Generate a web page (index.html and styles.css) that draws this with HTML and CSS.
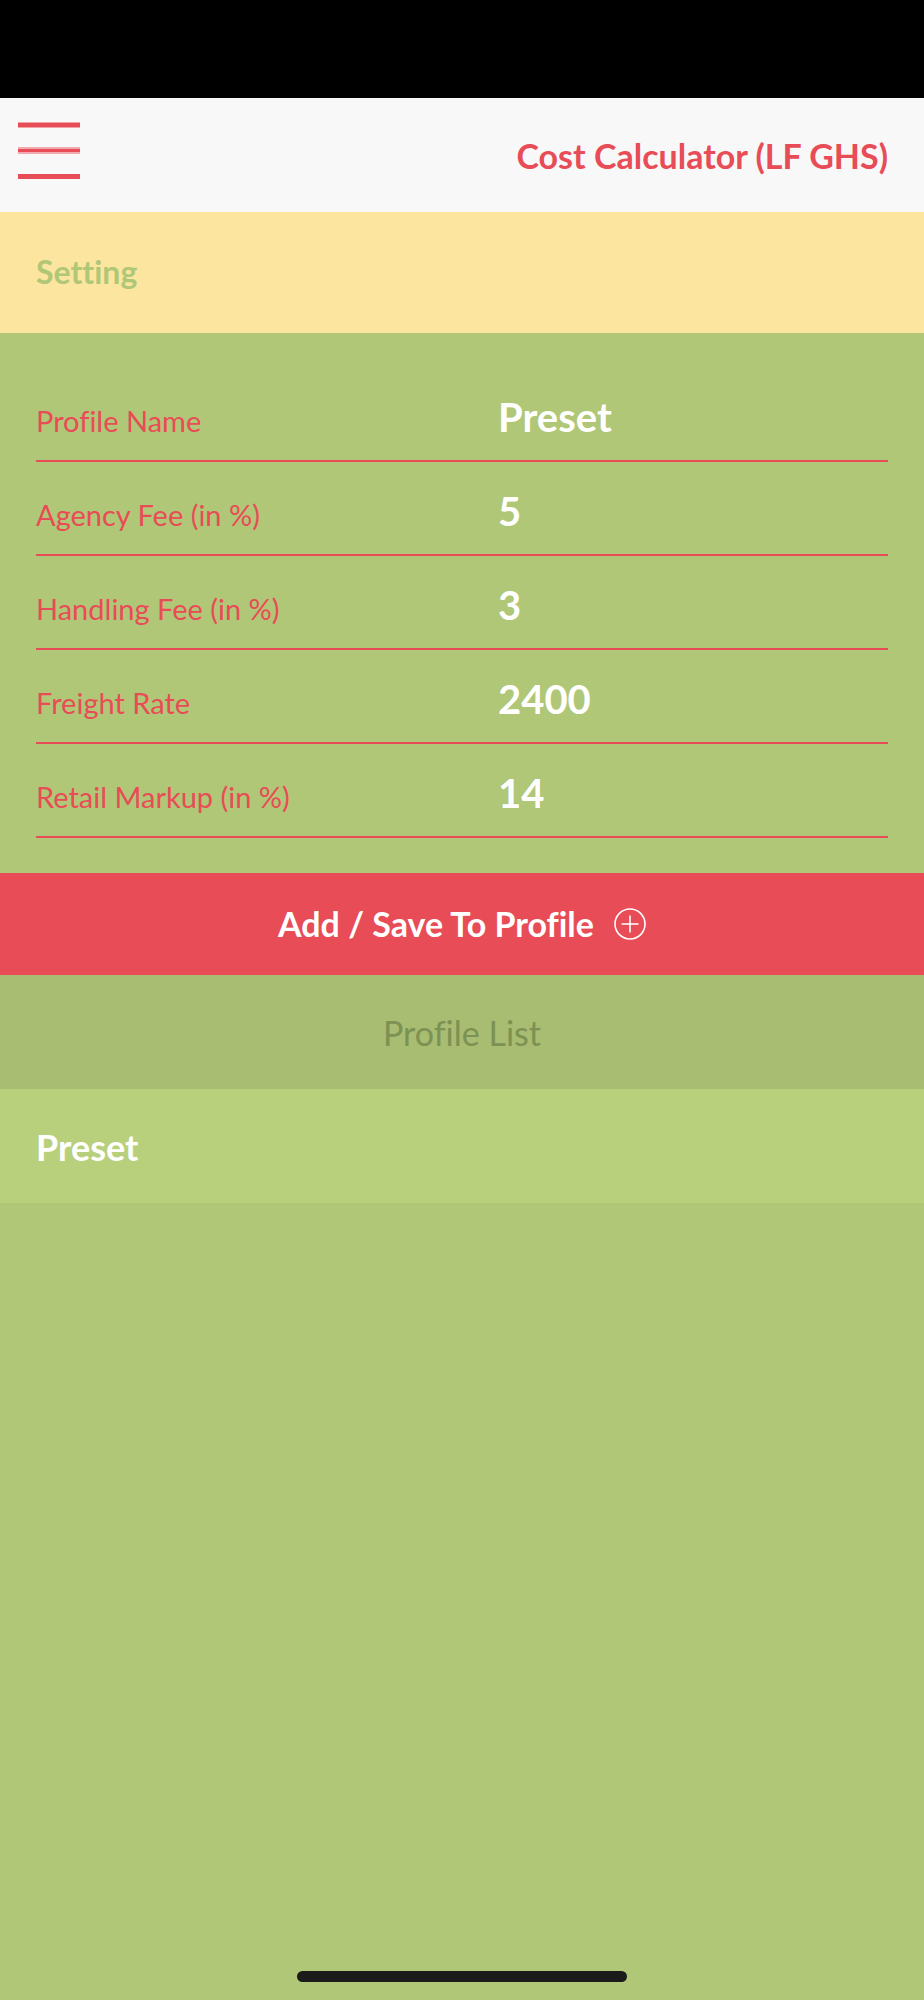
FILE: index.html
```html
<!DOCTYPE html>
<html lang="en">
<head>
<meta charset="utf-8">
<meta name="viewport" content="width=device-width, initial-scale=1">
<title>Cost Calculator</title>
<link rel="stylesheet" href="styles.css">
</head>
<body class="app">
<div class="status-bar"></div>
<header class="header">
  <button class="menu" type="button" aria-label="Menu">
    <svg class="menu-icon" viewBox="0 0 62 58" aria-hidden="true">
      <path d="M0 3H62M0 54.5H62" stroke="#e84c56" stroke-width="5"/>
      <path d="M0 28.5H62" stroke="#e84c56" stroke-opacity=".45" stroke-width="7"/>
      <path d="M0 28.5H62" stroke="#e84c56" stroke-width="3"/>
    </svg>
  </button>
  <h1 class="title">Cost Calculator (LF GHS)</h1>
</header>
<main class="main">
  <h2 class="section-title">Setting</h2>
  <form class="form">
    <div class="fields">
      <div class="field"><label class="label" for="name">Profile Name</label><input class="value" id="name" type="text" value="Preset"></div>
      <div class="field"><label class="label" for="agency">Agency Fee (in %)</label><input class="value" id="agency" type="text" inputmode="decimal" value="5"></div>
      <div class="field"><label class="label" for="handling">Handling Fee (in %)</label><input class="value" id="handling" type="text" inputmode="decimal" value="3"></div>
      <div class="field"><label class="label" for="freight">Freight Rate</label><input class="value" id="freight" type="text" inputmode="decimal" value="2400"></div>
      <div class="field"><label class="label" for="markup">Retail Markup (in %)</label><input class="value" id="markup" type="text" inputmode="decimal" value="14"></div>
    </div>
    <button class="save" type="button">
      <span>Add / Save To Profile</span>
      <svg class="plus-icon" viewBox="0 0 32 32" fill="none" stroke="#fff" aria-hidden="true">
        <circle cx="16" cy="16" r="15" stroke-width="1.6"/>
        <path d="M7.5 16H24.5M16 7.5V24.5" stroke-width="1.6"/>
      </svg>
    </button>
  </form>
  <section>
    <h2 class="list-title">Profile List</h2>
    <ul class="list">
      <li><button class="item" type="button">Preset</button></li>
    </ul>
  </section>
</main>
<div class="home-bar"><div class="home-indicator"></div></div>
</body>
</html>
```
FILE: styles.css
```css
* {
  box-sizing: border-box;
}

.app {
  display: flex;
  flex-direction: column;
  min-height: 100vh;
  margin: 0;
  background: #b0c777;
  font-family: "Century Gothic", Lato, sans-serif;
  font-variant-ligatures: none;
}

.app button,
.app input {
  border: 0;
  border-radius: 0;
  font-family: inherit;
  font-variant-ligatures: inherit;
}

.status-bar {
  height: 98px;
  background: #000;
}

.header {
  display: flex;
  justify-content: space-between;
  align-items: flex-start;
  min-height: 114px;
  padding: 0 36px 0 18px;
  background: #f8f8f8;
}

.menu {
  padding: 24px 0 0;
  background: none;
}

.menu-icon {
  display: block;
  width: 62px;
  height: 58px;
}

.title {
  margin: 0;
  padding: 38px 0 36px;
  color: #e84c56;
  font-size: 34px;
  line-height: 40px;
  font-weight: 700;
}

.section-title {
  margin: 0;
  padding: 40px 36px 41px;
  background: #fce59f;
  color: #b0c777;
  font-size: 32px;
  line-height: 40px;
  font-weight: 700;
}

.fields {
  padding: 35px 36px;
}

.field {
  display: grid;
  grid-template-columns: 462fr 390fr;
  align-items: baseline;
  padding: 25px 0 19px;
  border-bottom: 2px solid #e84c56;
}

.label {
  color: #e84c56;
  font-size: 29px;
  line-height: 40px;
  font-weight: 400;
}

.value {
  width: 100%;
  height: 48px;
  padding: 0;
  background: none;
  color: #fff;
  font-size: 40px;
  line-height: 48px;
  font-weight: 700;
}

.save {
  display: flex;
  justify-content: center;
  align-items: center;
  gap: 20px;
  width: 100%;
  padding: 31px 36px;
  background: #e84c56;
  color: #fff;
  font-size: 34px;
  line-height: 40px;
  font-weight: 700;
}

.plus-icon {
  width: 32px;
  height: 32px;
}

.list-title {
  margin: 0;
  padding: 38px 36px 36px;
  background: #a8bc72;
  color: #7c9152;
  font-size: 34px;
  line-height: 40px;
  font-weight: 400;
  text-align: center;
}

.list {
  margin: 0;
  padding: 0;
  list-style: none;
}

.item {
  display: block;
  width: 100%;
  padding: 38px 36px 36px;
  background: #b8d07c;
  color: #fff;
  font-size: 36px;
  line-height: 40px;
  font-weight: 700;
  text-align: left;
}

.home-bar {
  display: flex;
  justify-content: center;
  margin-top: auto;
  padding: 18px;
}

.home-indicator {
  width: 330px;
  height: 11px;
  border-radius: 6px;
  background: #1b1b1b;
}
```
